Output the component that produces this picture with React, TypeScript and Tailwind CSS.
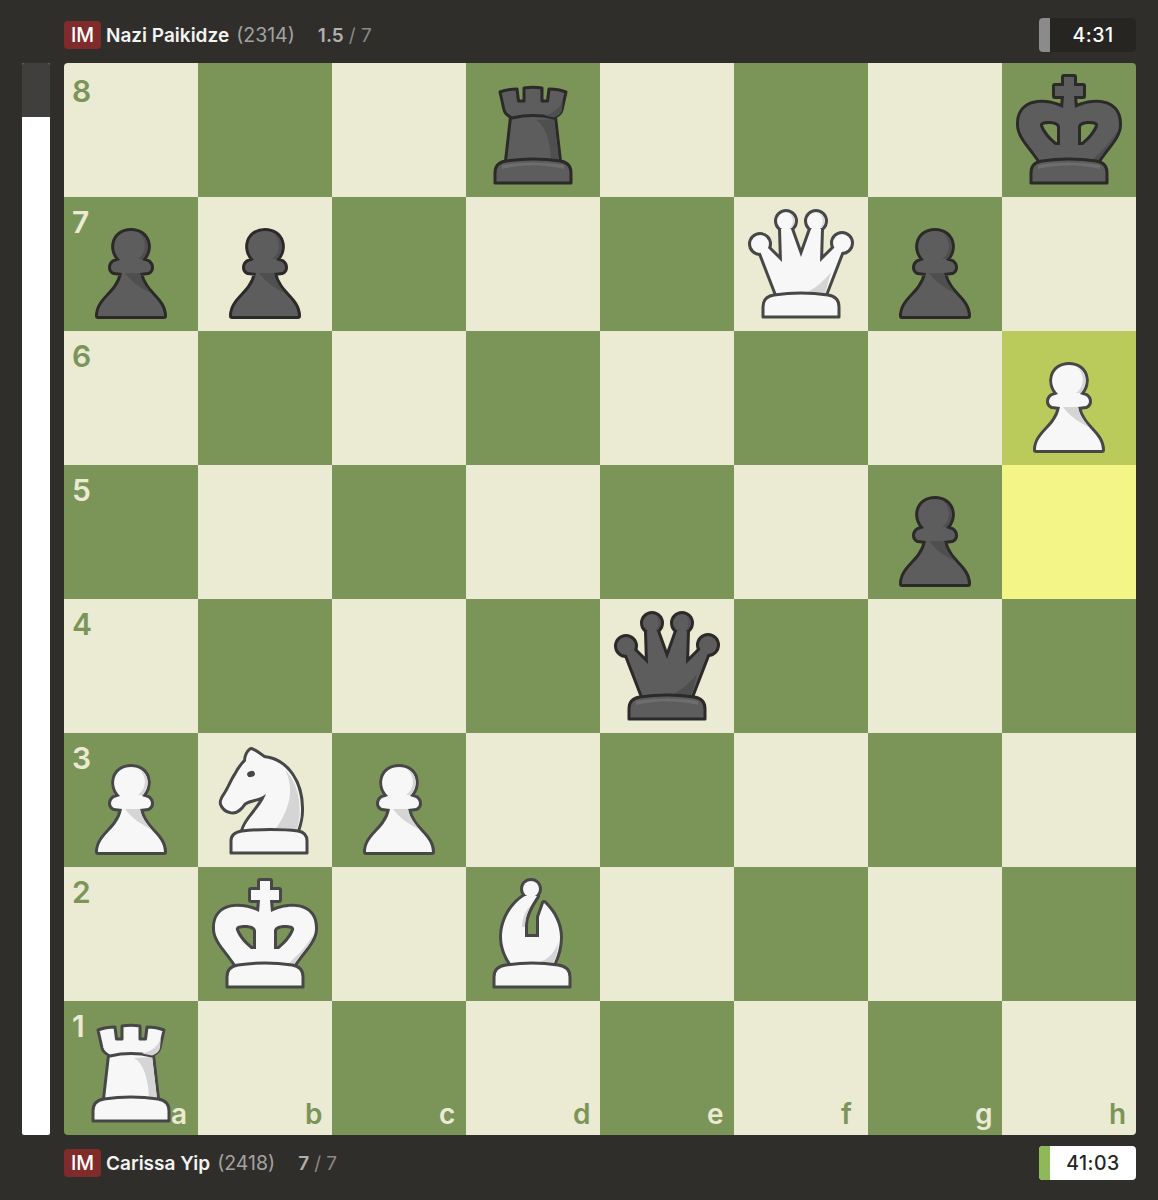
type Shape = { body: string[]; shade: string[]; over?: string; overShade?: string; base?: string; eye?: boolean };

const BASE = "M29 120 L29 110 C29 103 33 99 40 98 C57 95.5 77 95.5 94 98 C101 99 105 103 105 110 L105 120 Z";

const ball = (x: number, y: number, r: number) =>
  `M${x - r} ${y} A${r} ${r} 0 1 1 ${x + r} ${y} A${r} ${r} 0 1 1 ${x - r} ${y} Z`;

const shapes: Record<string, Shape> = {
  p: {
    body: [
      "M34 119 C34 106 46 99 52 90 C55 86 57 81 58 76 L50 75 C46 73 46 68 50 65 L56 63 C45 52 50 34 67 34 C84 34 89 52 78 63 L84 65 C88 68 88 73 84 75 L76 76 C77 81 79 86 82 90 C88 99 100 106 100 119 Z",
    ],
    shade: [
      "M75 36 C83 43 83 56 74 62 L79 62 C86 52 85 41 75 36 Z",
      "M61 76 L76 76 C77 84 83 91 88 97 C79 92 68 86 61 76 Z",
    ],
  },
  r: {
    body: ["M46 54 L88 54 L93 98 L41 98 Z"],
    shade: ["M70 57 C79 62 84 76 85 97 L93 97 L88 56 Z"],
    over: "M34 29 C39 27 46 26 51 26 L52.5 38 L58 38 L58 25 C64 24 70 24 76 25 L76 38 L81.5 38 L83 26 C88 26 95 27 100 29 L96 47 C95 51 92 53 88 55 C75 52 59 52 46 55 C42 53 39 51 38 47 Z",
    overShade: "M97 36 C95 45 88 50 78 52.5 L88 54.5 C92 53 95 51 96 47 Z",
    base: BASE,
  },
  n: {
    body: [
      "M53 17 C57 18 62 22 66 25 C88 27 104 49 103 78 C103 86 101 92 99 98 L45 98 C49 84 61 78 68 61 C62 66 52 66 46 70 C42 76 37 80 32 78 C28 77 25 74 24 71 C23 68 25 65 27 62 C31 56 34 48 38 42 C41 36 45 31 48 28 C48 24 50 19 53 17 Z",
    ],
    shade: ["M87 37 C95 52 95 72 77 97 L99 97 C104 80 103 52 87 37 Z"],
    base: "M33 120 L33 108 C33 102 37 99 44 98 C60 96 85 96 100 98 C106 99 109 102 109 108 L109 120 Z",
    eye: true,
  },
  b: {
    body: [
      ball(65, 22, 8),
      "M59 29 L71 29 C65 38 59 48 59 58 L59 70 L73 70 L73 50 L78 36 C88 45 94 58 94 70 C94 80 91 90 87 98 L46 98 C40 90 36 80 36 70 C36 52 47 36 59 29 Z",
    ],
    shade: [
      "M65 38 C59 44 56 52 56 60 L59 60 C59 52 62 44 65 38 Z",
      "M66 97 C79 95 88 88 92 76 C92 84 90 91 87 97 Z",
    ],
    base: "M28 120 L28 110 C28 103 32 99 40 98 C57 95.5 75 95.5 92 98 C100 99 104 103 104 110 L104 120 Z",
  },
  q: {
    body: [
      ball(52, 24, 9),
      ball(82, 24, 9),
      ball(26, 47, 9),
      ball(108, 46, 9),
      "M43 98 L26 54 L33 50 L48 65 L47 32 L57 32 L67 60 L77 32 L87 32 L86 65 L101 50 L108 54 L91 98 Z",
    ],
    shade: [
      "M97 75 C88 86 80 92 70 97 L91 97 Z",
      "M56 17 C60 22 60 27 55 32 L58 30 C62 25 61 20 56 17 Z",
      "M86 17 C90 22 90 27 85 32 L88 30 C92 25 91 20 86 17 Z",
    ],
    base: BASE,
  },
  k: {
    body: [
      "M62 33 L53 33 L53 23 L62 23 L62 14 L72 14 L72 23 L81 23 L81 33 L72 33 L73 45 C88 37 118 35 117 62 C117 74 104 85 96 98 L38 98 C30 85 17 74 17 62 C16 35 46 37 61 45 Z M38 63 C37 59 42 58 47 58 C53 58 58 60 58 64 L58 82 L53 82 C47 77 41 71 38 63 Z M96 63 C97 59 92 58 87 58 C81 58 76 60 76 64 L76 82 L81 82 C87 77 93 71 96 63 Z",
    ],
    shade: ["M115 68 C108 80 100 88 90 97 L96 97 C104 85 113 78 115 68 Z"],
    base: BASE,
  },
};

function Piece({ kind, white }: { kind: string; white: boolean }) {
  const s = shapes[kind];
  const ink = white ? "#474747" : "#2b2a28";
  const fill = white ? "#f7f7f8" : "#5e5d5e";
  const shade = white ? "#d5d5d6" : "#504f50";
  const top = white ? "#f7f7f8" : "#6f6e6f";
  return (
    <svg viewBox="0 0 134 134" className="h-full w-full">
      {s.body.map((d) => (
        <path key={d} d={d} fill={ink} stroke={ink} strokeWidth={6} strokeLinejoin="round" fillRule="evenodd" />
      ))}
      {s.body.map((d) => (
        <path key={d} d={d} fill={fill} fillRule="evenodd" />
      ))}
      {s.shade.map((d) => (
        <path key={d} d={d} fill={shade} />
      ))}
      {s.over && <path d={s.over} fill={fill} stroke={ink} strokeWidth={3} strokeLinejoin="round" />}
      {s.overShade && <path d={s.overShade} fill={shade} />}
      {s.eye && <ellipse cx={53} cy={41} rx={4} ry={3} fill={ink} transform="rotate(-20 53 41)" />}
      {s.base && (
        <>
          <path d={s.base} fill={fill} stroke={ink} strokeWidth={3} strokeLinejoin="round" />
          {!white && (
            <path d="M36 106 C56 101 78 101 98 106 L98 102 C78 99 56 99 36 102 Z" fill={top} />
          )}
        </>
      )}
    </svg>
  );
}

// uppercase = white, rows from rank 8 down to rank 1
const position = [
  "...r...k",
  "pp...Qp.",
  ".......P",
  "......p.",
  "....q...",
  "PNP.....",
  ".K.B....",
  "R.......",
];
const files = ["a", "b", "c", "d", "e", "f", "g", "h"];

function Square({ row, col }: { row: number; col: number }) {
  const dark = (row + col) % 2 === 1;
  const piece = position[row][col];
  let bg = dark ? "bg-[#7b9559]" : "bg-[#ebead3]";
  if (row === 2 && col === 7) bg = "bg-[#bbcb5b]";
  if (row === 3 && col === 7) bg = "bg-[#f4f587]";
  const label = dark ? "text-[#ebead3]" : "text-[#7b9559]";
  return (
    <div className={`relative ${bg}`}>
      {piece !== "." && <Piece kind={piece.toLowerCase()} white={piece !== piece.toLowerCase()} />}
      {col === 0 && (
        <span
          className={`absolute left-[8px] ${row === 0 ? "top-[10px]" : "top-[7px]"} text-[30px] leading-[36px] font-semibold ${label}`}
        >
          {8 - row}
        </span>
      )}
      {row === 7 && (
        <span className={`absolute bottom-[3px] left-[107px] text-[28px] leading-[36px] font-semibold ${label}`}>
          {files[col]}
        </span>
      )}
    </div>
  );
}

function PlayerRow({
  name,
  rating,
  score,
  clock,
  active,
  className,
}: {
  name: string;
  rating: string;
  score: string;
  clock: string;
  active?: boolean;
  className: string;
}) {
  return (
    <div className={`flex items-center pl-[64px] pr-[22px] ${className}`}>
      <span className="flex h-[28px] w-[37px] items-center justify-center rounded-[4px] bg-[#7f2b2b] pt-[2px] text-[19.5px] font-medium text-white">
        IM
      </span>
      <span className="ml-[5px] pt-[2px] text-[19px] font-semibold text-[#f3f3f2]">{name}</span>
      <span className="ml-[7px] pt-[2px] text-[19.5px] text-[#a3a2a0]">({rating})</span>
      <span className="ml-[23px] pt-[2px] text-[19px] font-semibold text-[#b1b0ae]">{score}</span>
      <span className="ml-[5px] pt-[2px] text-[19px] text-[#8a8987]">/ 7</span>
      <div
        className={`ml-auto flex h-[34px] w-[97px] overflow-hidden rounded-[4px] ${active ? "bg-white text-[#262522]" : "bg-[#262522] text-white"}`}
      >
        <div className={`w-[11px] ${active ? "bg-[#8fb85a]" : "bg-[#8b8b8b]"}`} />
        <span className="flex flex-1 items-center justify-center pt-[2px] text-[19.5px] font-medium tracking-[0.5px]">
          {clock}
        </span>
      </div>
    </div>
  );
}

export default function App() {
  return (
    <div className="flex h-[1200px] w-[1158px] flex-col bg-[#2f2e2b] font-['Inter',sans-serif]">
      <PlayerRow
        name="Nazi Paikidze"
        rating="2314"
        score="1.5"
        clock="4:31"
        className="h-[63px] pt-[7px]"
      />
      <div className="flex gap-[14px] pl-[22px]">
        <div className="flex h-[1072px] w-[28px] flex-col overflow-hidden rounded-[2px] bg-white">
          <div className="h-[54px] bg-[#403f3d]" />
        </div>
        <div className="grid h-[1072px] w-[1072px] grid-cols-8 grid-rows-8 overflow-hidden rounded-[4px]">
          {position.map((rank, row) =>
            rank.split("").map((_, col) => <Square key={`${row}-${col}`} row={row} col={col} />),
          )}
        </div>
      </div>
      <PlayerRow name="Carissa Yip" rating="2418" score="7" clock="41:03" active className="h-[56px]" />
    </div>
  );
}
